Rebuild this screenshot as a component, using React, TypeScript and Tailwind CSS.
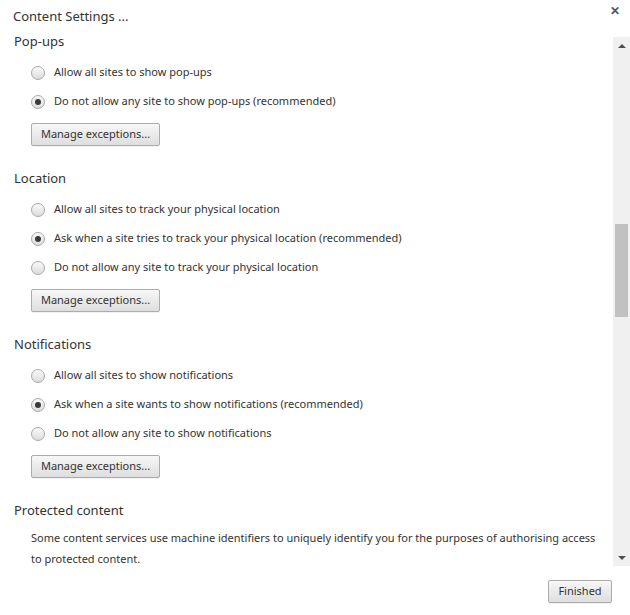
import type { ReactNode } from 'react'

const sections = [
  {
    title: 'Pop-ups',
    options: ['Allow all sites to show pop-ups', 'Do not allow any site to show pop-ups (recommended)'],
    selected: 1,
  },
  {
    title: 'Location',
    options: [
      'Allow all sites to track your physical location',
      'Ask when a site tries to track your physical location (recommended)',
      'Do not allow any site to track your physical location',
    ],
    selected: 1,
  },
  {
    title: 'Notifications',
    options: [
      'Allow all sites to show notifications',
      'Ask when a site wants to show notifications (recommended)',
      'Do not allow any site to show notifications',
    ],
    selected: 1,
  },
]

function Radio({ checked }: { checked: boolean }) {
  return (
    <span className="flex h-[14px] w-[14px] shrink-0 items-center justify-center rounded-full border border-[#a9a9a9] bg-gradient-to-b from-[#fafafa] to-[#dcdcdc]">
      {checked && <span className="h-[6px] w-[6px] rounded-full bg-[#3a3a3a]" />}
    </span>
  )
}

function Button({ children, className = '' }: { children: ReactNode; className?: string }) {
  return (
    <button
      className={
        'flex h-[23px] items-center justify-center rounded-[2px] border border-[#acacac] bg-gradient-to-b from-[#f7f7f7] to-[#dedede] text-[11px] text-[#333] shadow-[0_1px_0_rgba(0,0,0,0.05)] ' +
        className
      }
    >
      {children}
    </button>
  )
}

export default function App() {
  return (
    <div className="relative flex h-[615px] w-[630px] flex-col bg-white text-[#333] font-['Noto_Sans',sans-serif]">
      <div className="flex h-[37px] shrink-0 items-center pl-[13px] pb-[3px] text-[13px]">Content Settings ...</div>
      <button className="absolute right-[10px] top-[5px] text-[12px] font-bold leading-none text-[#555]">✕</button>

      <div className="flex h-[529px] shrink-0">
        <div className="flex-1 overflow-hidden">
          <div className="-mt-[6px] flex flex-col gap-[22px]">
            {sections.map((s) => (
              <section key={s.title} className="flex flex-col">
                <h2 className="pl-[14px] text-[13px] leading-[20px]">{s.title}</h2>
                <div className="mt-[7px] flex flex-col pl-[31px]">
                  {s.options.map((o, i) => (
                    <label key={o} className="flex h-[29px] items-center gap-[9px] text-[11px]">
                      <Radio checked={i === s.selected} />
                      <span>{o}</span>
                    </label>
                  ))}
                </div>
                <div className="mt-[7px] pl-[31px]">
                  <Button className="w-[129px]">Manage exceptions...</Button>
                </div>
              </section>
            ))}
            <section className="flex flex-col">
              <h2 className="pl-[14px] text-[13px] leading-[20px]">Protected content</h2>
              <p className="mt-[7px] pl-[31px] pr-[12px] text-[11px] leading-[21px]">
                Some content services use machine identifiers to uniquely identify you for the purposes of authorising
                access to protected content.
              </p>
            </section>
          </div>
        </div>

        <div className="flex w-[17px] shrink-0 flex-col items-center bg-[#f0f0f0]">
          <div className="flex h-[17px] w-full items-center justify-center">
            <span className="h-0 w-0 border-x-[4px] border-b-[4px] border-x-transparent border-b-[#505050]" />
          </div>
          <div className="flex-1 w-full pt-[170px] px-[2px]">
            <div className="h-[93px] w-full bg-[#c1c1c1]" />
          </div>
          <div className="flex h-[17px] w-full items-center justify-center">
            <span className="h-0 w-0 border-x-[4px] border-t-[4px] border-x-transparent border-t-[#505050]" />
          </div>
        </div>
      </div>

      <div className="flex flex-1 items-start justify-end pr-[18px] pt-[14px]">
        <Button className="w-[64px]">Finished</Button>
      </div>
    </div>
  )
}
